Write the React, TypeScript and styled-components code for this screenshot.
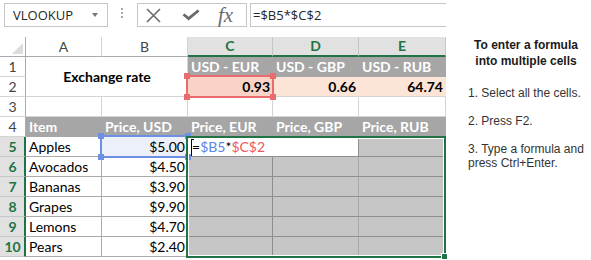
import React from 'react';
import styled, { createGlobalStyle, css } from 'styled-components';

const GREEN = '#217346';
const GRID_LINE = '#d4d4d4';
const HEAD_GREY = '#a6a6a6';
const PEACH = '#fce4d6';
const SEL_GREY = '#c6c6c6';
const SEL_LINE = '#8e8e8e';

const GlobalStyle = createGlobalStyle`
  html, body {
    margin: 0;
    padding: 0;
    background: #fff;
  }
  body {
    width: 591px;
    height: 260px;
    overflow: hidden;
    font-family: Lato, "Liberation Sans", sans-serif;
  }
`;

const items: [string, string][] = [
  ['Apples', '$5.00'],
  ['Avocados', '$4.50'],
  ['Bananas', '$3.90'],
  ['Grapes', '$9.90'],
  ['Lemons', '$4.70'],
  ['Pears', '$2.40'],
];

const App: React.FC = () => {
  return (
    <Page>
      <GlobalStyle />
      <Sheet>
        <Toolbar>
          <NameBox>
            VLOOKUP
            <DropArrow />
          </NameBox>
          <Grip />
          <ButtonBox>
            <svg width="15" height="15" viewBox="0 0 15 15">
              <path d="M1 1L14 14M14 1L1 14" stroke="#6b6b6b" strokeWidth="1.6" fill="none" />
            </svg>
            <svg width="18" height="12" viewBox="0 0 18 12">
              <path d="M0.5 6.2L2.6 4.4L6.6 7.8L15.6 0.6L17.5 2.4L6.6 11.5Z" fill="#6b6b6b" />
            </svg>
            <FxLabel>fx</FxLabel>
          </ButtonBox>
          <FormulaInput>=$B5*$C$2</FormulaInput>
        </Toolbar>

        <Grid>
          <Corner />
          <ColHeader>A</ColHeader>
          <ColHeader>B</ColHeader>
          <ColHeader $selected>C</ColHeader>
          <ColHeader $selected>D</ColHeader>
          <ColHeader $selected>E</ColHeader>

          <RowHeader>1</RowHeader>
          <MergedCell>Exchange rate</MergedCell>
          <Cell $fill={HEAD_GREY} $line={HEAD_GREY} $bold $color="#fff">USD - EUR</Cell>
          <Cell $fill={HEAD_GREY} $line={HEAD_GREY} $bold $color="#fff">USD - GBP</Cell>
          <Cell $fill={HEAD_GREY} $line={HEAD_GREY} $bold $color="#fff">USD - RUB</Cell>

          <RowHeader>2</RowHeader>
          <Cell $fill="#f9d3c5" $vline="#f9d3c5" $bold $align="right">0.93</Cell>
          <Cell $fill={PEACH} $vline={PEACH} $bold $align="right">0.66</Cell>
          <Cell $fill={PEACH} $bold $align="right">64.74</Cell>

          <RowHeader>3</RowHeader>
          <Cell />
          <Cell />
          <Cell />
          <Cell />
          <Cell />

          <RowHeader>4</RowHeader>
          {['Item', 'Price, USD', 'Price, EUR', 'Price, GBP', 'Price, RUB'].map((t) => (
            <Cell key={t} $fill={HEAD_GREY} $line={HEAD_GREY} $bold $color="#fff">
              {t}
            </Cell>
          ))}

          {items.map(([name, price], i) => (
            <React.Fragment key={name}>
              <RowHeader $selected>{i + 5}</RowHeader>
              <Cell $line="#ababab">{name}</Cell>
              <Cell $line="#ababab" $align="right" $fill={i === 0 ? '#ebf0fb' : undefined}>
                {price}
              </Cell>
              {i === 0 ? (
                <>
                  <Cell $span={2} $line={SEL_LINE}>
                    <Caret />
                    =<RefText $color="#5b86ea">$B5</RefText>*<RefText $color="#f0575c">$C$2</RefText>
                  </Cell>
                  <Cell $fill={SEL_GREY} $line={SEL_LINE} $vline="#a8a8a8" />
                </>
              ) : (
                <>
                  <Cell $fill={SEL_GREY} $line={SEL_LINE} />
                  <Cell $fill={SEL_GREY} $line={SEL_LINE} $vline="#a8a8a8" />
                  <Cell $fill={SEL_GREY} $line={SEL_LINE} />
                </>
              )}
            </React.Fragment>
          ))}

          <RefBox $color="#ea6b6e" $col="4 / 5" $row="3 / 4">
            <Handle $v="top" $h="left" />
            <Handle $v="top" $h="right" />
            <Handle $v="bottom" $h="left" />
            <Handle $v="bottom" $h="right" />
          </RefBox>
          <RefBox $color="#6d8fe4" $col="3 / 4" $row="6 / 7">
            <Handle $v="top" $h="left" />
            <Handle $v="top" $h="right" />
            <Handle $v="bottom" $h="left" />
            <Handle $v="bottom" $h="right" />
          </RefBox>
          <Selection>
            <FillHandle />
          </Selection>
        </Grid>
      </Sheet>

      <Notes>
        <NotesTitle>
          To enter a formula
          <br />
          into multiple cells
        </NotesTitle>
        <Steps>
          <Step>1. Select all the cells.</Step>
          <Step>2. Press F2.</Step>
          <Step>
            3. Type a formula and
            <br />
            press Ctrl+Enter.
          </Step>
        </Steps>
      </Notes>
    </Page>
  );
};

export default App;

const Page = styled.div`
  display: flex;
  width: 591px;
  height: 260px;
  overflow: hidden;
`;

const Sheet = styled.div`
  flex: none;
  width: 446px;
  display: flex;
  flex-direction: column;
`;

/* formula bar */

const Toolbar = styled.div`
  box-sizing: border-box;
  height: 37px;
  display: flex;
  align-items: flex-start;
  padding: 3px 0 0 4px;
  font-family: "Open Sans", sans-serif;
  font-size: 13px;
  color: #262626;
`;

const NameBox = styled.div`
  box-sizing: border-box;
  width: 104px;
  height: 24px;
  display: flex;
  align-items: center;
  justify-content: space-between;
  padding: 0 9px 0 8px;
  border: 1px solid #c6c6c6;
`;

const DropArrow = styled.span`
  width: 0;
  height: 0;
  border-left: 3.5px solid transparent;
  border-right: 3.5px solid transparent;
  border-top: 4px solid #777;
`;

const Grip = styled.span`
  width: 2px;
  height: 10px;
  margin: 5px 14px 0 13px;
  background: repeating-linear-gradient(#a8a8a8 0 2px, transparent 2px 4px);
`;

const ButtonBox = styled.div`
  box-sizing: border-box;
  width: 110px;
  height: 24px;
  display: flex;
  align-items: center;
  gap: 21px;
  padding-left: 8px;
  border: 1px solid #c6c6c6;

  svg {
    flex: none;
  }
`;

const FxLabel = styled.span`
  margin-left: -3px;
  font-family: "Liberation Serif", "DejaVu Serif", serif;
  font-style: italic;
  font-size: 21px;
  line-height: 22px;
  color: #6b6b6b;
`;

const FormulaInput = styled.div`
  box-sizing: border-box;
  flex: 1;
  height: 24px;
  margin-left: 3px;
  display: flex;
  align-items: center;
  padding-left: 2px;
  border: 1px solid #c6c6c6;
  border-right: none;
`;

/* spreadsheet grid */

const Grid = styled.div`
  position: relative;
  display: grid;
  grid-template-columns: 26px 76px 86px 85px 86px 87px;
  grid-auto-rows: 20px;
  font-size: 14px;
`;

const Corner = styled.div`
  position: relative;
  box-sizing: border-box;
  border-right: 1px solid #ababab;
  border-bottom: 1px solid #ababab;

  &::after {
    content: '';
    position: absolute;
    right: 2px;
    bottom: 2px;
    width: 0;
    height: 0;
    border-left: 11px solid transparent;
    border-bottom: 11px solid #dcdcdc;
  }
`;

interface IHeaderProps {
  $selected?: boolean;
}

const ColHeader = styled.div<IHeaderProps>`
  box-sizing: border-box;
  text-align: center;
  font-size: 14px;
  line-height: 19px;
  color: #444;
  background: #fff;
  border-right: 1px solid ${GRID_LINE};
  border-bottom: 1px solid #ababab;

  ${({ $selected }) =>
    $selected &&
    css`
      background: #e1e1e1;
      color: ${GREEN};
      font-weight: 700;
      line-height: 18px;
      border-right-color: #c6c6c6;
      border-bottom: 2px solid ${GREEN};
    `}
`;

const RowHeader = styled.div<IHeaderProps>`
  box-sizing: border-box;
  text-align: center;
  font-size: 14px;
  line-height: 19px;
  color: #444;
  background: #fff;
  border-right: 1px solid #ababab;
  border-bottom: 1px solid ${GRID_LINE};

  ${({ $selected }) =>
    $selected &&
    css`
      background: #e1e1e1;
      color: ${GREEN};
      font-weight: 700;
      padding-left: 1px;
      border-right: 2px solid ${GREEN};
      border-bottom-color: #c6c6c6;
    `}
`;

interface ICellProps {
  $fill?: string;
  $line?: string;
  $vline?: string;
  $bold?: boolean;
  $align?: 'left' | 'right' | 'center';
  $color?: string;
  $span?: number;
}

const Cell = styled.div<ICellProps>`
  box-sizing: border-box;
  min-width: 0;
  overflow: hidden;
  white-space: nowrap;
  padding: 0 2px 0 3px;
  line-height: 20px;
  background: ${({ $fill }) => $fill ?? '#fff'};
  color: ${({ $color }) => $color ?? '#000'};
  font-weight: ${({ $bold }) => ($bold ? 700 : 400)};
  text-align: ${({ $align }) => $align ?? 'left'};
  border-right: 1px solid ${({ $vline, $line, $fill }) => $vline ?? $line ?? $fill ?? GRID_LINE};
  border-bottom: 1px solid ${({ $line }) => $line ?? GRID_LINE};

  ${({ $span }) =>
    $span &&
    css`
      grid-column: span ${$span};
      border-right-color: ${SEL_LINE};
    `}
`;

const MergedCell = styled(Cell)`
  grid-column: span 2;
  grid-row: span 2;
  display: flex;
  align-items: center;
  justify-content: center;
  font-weight: 700;
`;

const Caret = styled.span`
  position: relative;
  display: inline-block;
  width: 1px;
  height: 18px;
  margin: 0 0 -5px 0;
  background: #000;

  &::before {
    content: '';
    position: absolute;
    top: 0;
    left: 0;
    width: 3px;
    height: 1px;
    background: #000;
  }
`;

const RefText = styled.span<{ $color: string }>`
  color: ${({ $color }) => $color};
`;

/* overlays drawn over the cells */

interface IRefBoxProps {
  $color: string;
  $col: string;
  $row: string;
}

const RefBox = styled.div<IRefBoxProps>`
  position: absolute;
  grid-column: ${({ $col }) => $col};
  grid-row: ${({ $row }) => $row};
  top: -2px;
  left: -2px;
  right: -1px;
  bottom: -1px;
  border: 2px solid ${({ $color }) => $color};
  color: ${({ $color }) => $color};
  pointer-events: none;
`;

interface IHandleProps {
  $v: 'top' | 'bottom';
  $h: 'left' | 'right';
}

const Handle = styled.span<IHandleProps>`
  position: absolute;
  ${({ $v }) => $v}: -4px;
  ${({ $h }) => $h}: -4px;
  width: 6px;
  height: 6px;
  background: currentColor;
`;

const Selection = styled.div`
  position: absolute;
  grid-column: 4 / 7;
  grid-row: 6 / 12;
  top: -1px;
  left: -2px;
  right: 0;
  bottom: -1px;
  border: 2px solid ${GREEN};
  box-shadow: inset 0 0 0 1px #fff;
  pointer-events: none;
`;

const FillHandle = styled.span`
  position: absolute;
  right: -4px;
  bottom: -4px;
  width: 5px;
  height: 5px;
  background: ${GREEN};
  border: 1px solid #fff;
`;

/* instructions beside the sheet */

const Notes = styled.aside`
  flex: 1;
  padding: 37px 0 0 15px;
  font-family: "Liberation Sans", Arial, sans-serif;
  font-size: 12px;
  color: #333;
`;

const NotesTitle = styled.div`
  width: 130px;
  text-align: center;
  font-weight: 700;
  line-height: 16px;
  color: #1a1a1a;
`;

const Steps = styled.ol`
  list-style: none;
  margin: 17px 0 0 7px;
  padding: 0;
`;

const Step = styled.li`
  line-height: 14px;
  margin-bottom: 14px;
`;
